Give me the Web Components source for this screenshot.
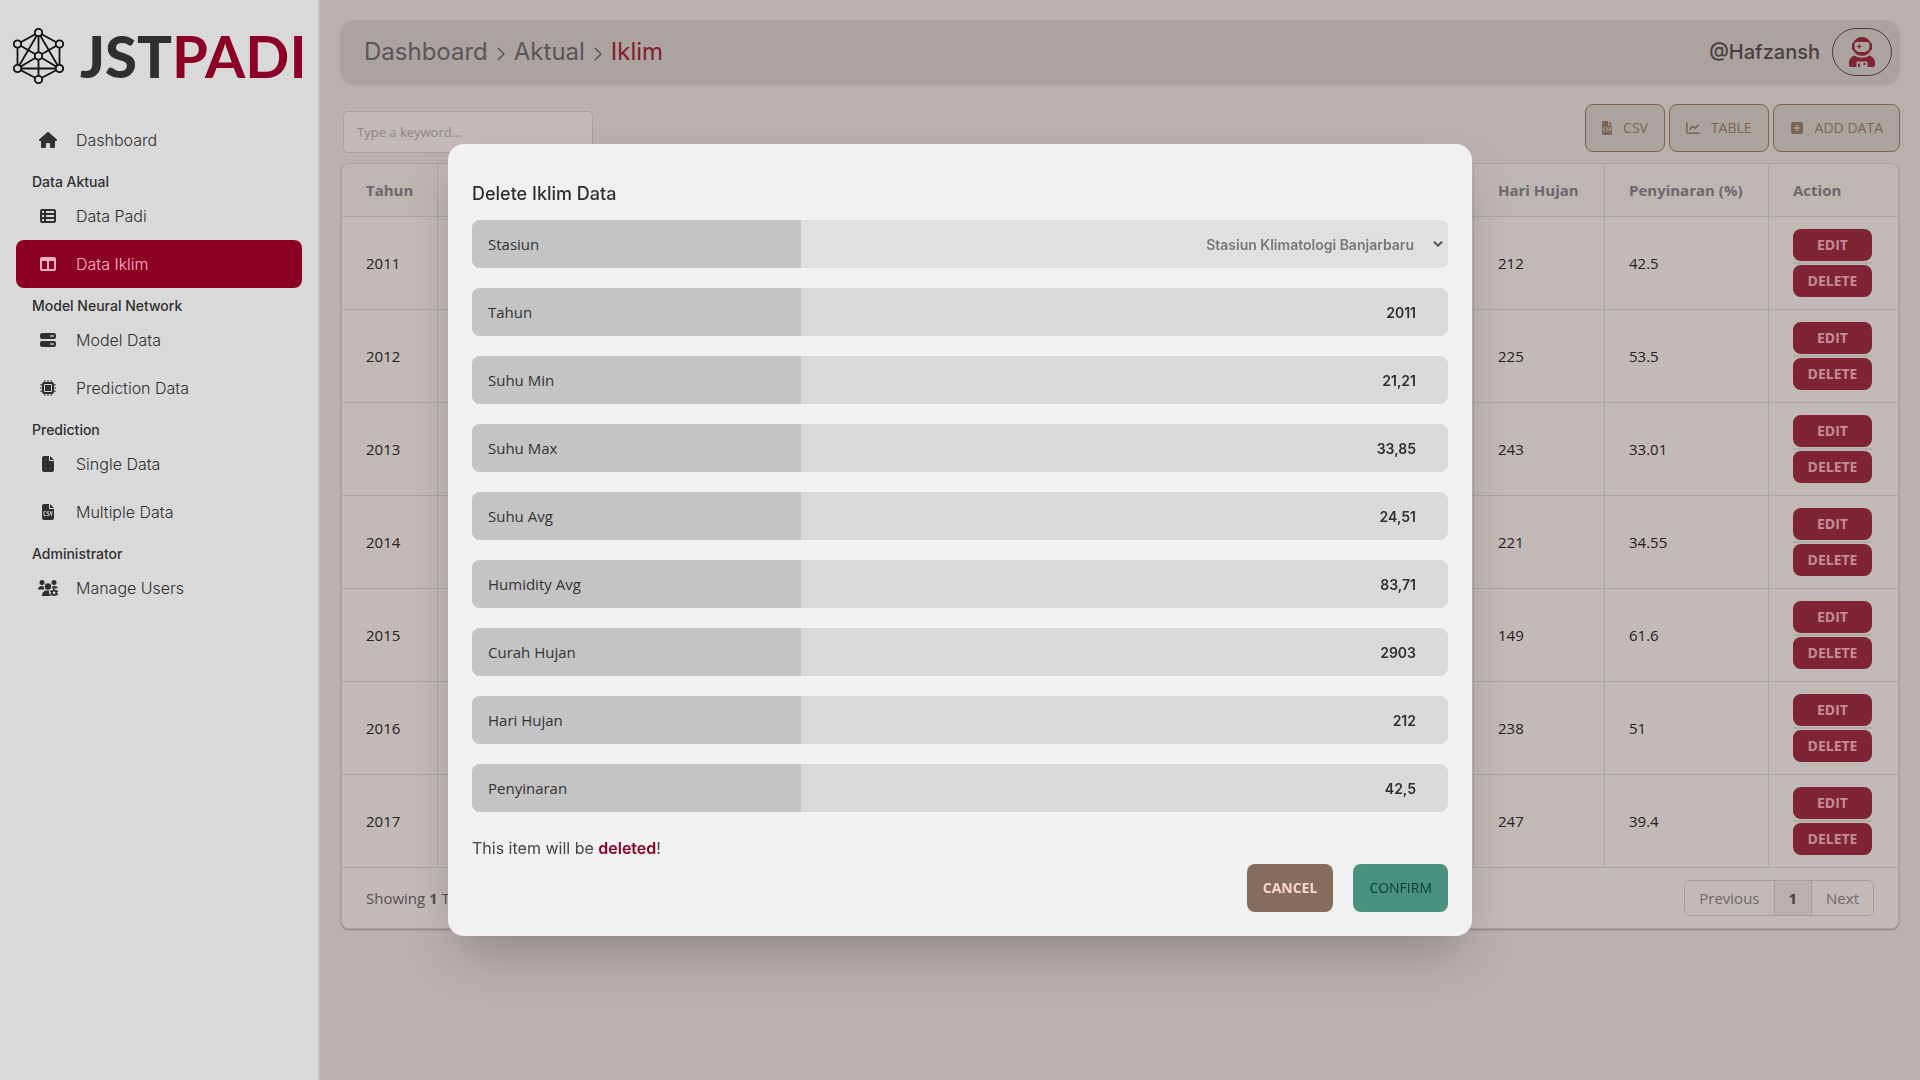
<!DOCTYPE html>
<html lang="id">
<head>
<meta charset="utf-8">
<title>JSTPADI – Iklim</title>
<style>
html,body{margin:0;min-height:100%}
body{background:#bab1ae;color:#2f2f2f;font-family:"Open Sans","Noto Sans",sans-serif;font-size:15px;font-optical-sizing:none;
--accent:#8c0026;--ui:"Inter",sans-serif}
</style>
</head>
<body>
<jst-app></jst-app>
<script>
const ICONS={
home:['0 0 576 512','<path d="M575.8 255.5c0 18-15 32.1-32 32.1h-32l.7 160.2c0 2.7-.2 5.4-.5 8.1V472c0 22.1-17.9 40-40 40H392c-22.1 0-40-17.9-40-40V384c0-17.700-14.300-32-32-32H256c-17.700 0-32 14.300-32 32v88c0 22.100-17.900 40-40 40H104c-22.100 0-40-17.900-40-40V287.600H32c-18 0-32-14-32-32.100c0-9 3-17 10-24L266.400 8c7-7 15-8 22-8s15 2 21 7L564.800 231.500c8 7 12 15 11 24z"/>'],
list:['0 0 16 16','<path fill-rule="evenodd" d="M2 1h12a2 2 0 0 1 2 2v10a2 2 0 0 1-2 2H2a2 2 0 0 1-2-2V3a2 2 0 0 1 2-2zM2 3v2h2V3zM6 3v2h8V3zM2 7v2h2V7zM6 7v2h8V7zM2 11v2h2v-2zM6 11v2h8v-2z"/>'],
columns:['0 0 16 16','<path fill-rule="evenodd" d="M2 1h12a2 2 0 0 1 2 2v10a2 2 0 0 1-2 2H2a2 2 0 0 1-2-2V3a2 2 0 0 1 2-2zM2 5v8h5V5zM9 5v8h5V5z"/>'],
server:['0 0 16 16','<path d="M2 1h12a2 2 0 0 1 2 2v2a2 2 0 0 1-2 2H2a2 2 0 0 1-2-2V3a2 2 0 0 1 2-2zM2 9h12a2 2 0 0 1 2 2v2a2 2 0 0 1-2 2H2a2 2 0 0 1-2-2v-2a2 2 0 0 1 2-2z"/><path fill="#999" d="M10 3h4v2h-4zM10 11h4v2h-4z"/>'],
chip:['0 0 16 16','<path fill-opacity=".6" d="M4 0h1.500v16H4zM7.250 0h1.500v16h-1.500zM10.500 0H12v16h-1.500zM0 4h16v1.500H0zM0 7.250h16v1.500H0zM0 10.500h16V12H0z"/><path d="M4 2h8a2 2 0 0 1 2 2v8a2 2 0 0 1-2 2H4a2 2 0 0 1-2-2V4a2 2 0 0 1 2-2z"/><path fill="none" stroke="#d9d9d9" d="M4.500 4.500h7v7h-7z"/>'],
file:['0 0 12 16','<path d="M0 2a2 2 0 0 1 2-2h5v4a1 1 0 0 0 1 1h4v9a2 2 0 0 1-2 2H2a2 2 0 0 1-2-2zM8 0v4h4z"/>'],
csv:['0 0 12 16','<path d="M0 2a2 2 0 0 1 2-2h5v4a1 1 0 0 0 1 1h4v9a2 2 0 0 1-2 2H2a2 2 0 0 1-2-2zM8 0v4h4z"/><path fill="none" stroke="var(--hole,#d9d9d9)" stroke-width=".9" d="M4 7.700H1.900v3.800H4M7.300 7.700H5.300v1.700h1.600v2.100H4.900M8.300 7.300l1 4.200 1-4.200"/>'],
users:['0 0 20 16','<circle cx="4" cy="2.500" r="2.500"/><circle cx="16" cy="2.500" r="2.500"/><circle cx="10" cy="6.500" r="3.200"/><path d="M0 9.500C0 7.300 1.500 6 3.500 6c1 0 1.700.2 2.300.6-.2 1.200.1 2.100.8 2.900zM14.200 6.600c.6-.4 1.300-.6 2.300-.6 1.500 0 2.900.8 3.300 2l-2 .4h-4c.4-.6.5-1.200.4-1.800zM4 16c0-3.500 2-5.500 5-5.500h2.300c-.6 2.200 0 4.200 1.700 5.500z"/><path fill-rule="evenodd" d="M15.300 8.700h1.600l.3 1.200.9.500 1.200-.4.800 1.400-.9.900v1l.9.900-.8 1.400-1.200-.4-.9.500-.3 1.200h-1.600l-.3-1.200-.9-.5-1.200.4-.8-1.400.9-.9v-1l-.9-.9.800-1.400 1.200.4.900-.5zM16.100 11.400a1.400 1.400 0 1 0 0 2.800 1.400 1.400 0 0 0 0-2.800z"/>'],
chart:['0 0 16 16','<path fill="none" stroke="currentColor" stroke-width="1.700" stroke-linecap="round" stroke-linejoin="round" d="M1 2v10.500a1.500 1.500 0 0 0 1.500 1.500H15M4.500 9.500 7.500 6l3 2.500L14 4.500"/>'],
plus:['0 0 14 14','<path fill-rule="evenodd" d="M3 1h8a2 2 0 0 1 2 2v8a2 2 0 0 1-2 2H3a2 2 0 0 1-2-2V3a2 2 0 0 1 2-2zM6.200 4v2.200H4v1.600h2.200V10h1.600V7.800H10V6.200H7.800V4z"/>'],
astronaut:['0 0 26 30','<path fill-rule="evenodd" d="M4.500 5.500C6 2 9 0 13 0s7 2 8.500 5.500L23 6.500v6l-1.500 1C20 17 17 18.700 13 18.700S6 17 4.500 13.500L3 12.500v-6zM8.500 5A3 3 0 0 0 5.500 8v2a5 5 0 0 0 5 5h5a5 5 0 0 0 5-5V8a3 3 0 0 0-3-3zM10.300 6.500l.8 2.200 2.200.8-2.200.8-.8 2.200-.8-2.200-2.200-.8 2.200-.8zM5.500 18.500c4.500 3 10.500 3 15 0 3 .8 5.500 3.800 5.500 7.500v2a2 2 0 0 1-2 2h-5.500v-4.500a1 1 0 0 0-1-1h-9a1 1 0 0 0-1 1V30H2a2 2 0 0 1-2-2v-2c0-3.700 2.500-6.700 5.500-7.500zM9 26.500h2V30H9zM14.500 26h2v2h-2z"/>'],
net:['0 0 51 56','<g fill="none" stroke="#111" stroke-width="1.800"><path d="M25.500 4.500 4.500 16v24.500l21 11 21-11V16zM25.500 4.500v47M25.500 4.500l-21 36h42zM4.500 16l21 12 21-12M4.500 40.500l21-12.500 21 12.500"/><g fill="#d9d9d9"><circle cx="25.500" cy="4.500" r="3.700"/><circle cx="4.500" cy="16" r="3.700"/><circle cx="46.500" cy="16" r="3.700"/><circle cx="25.500" cy="28" r="3.700"/><circle cx="4.500" cy="40.500" r="3.700"/><circle cx="46.500" cy="40.500" r="3.700"/><circle cx="25.500" cy="51.500" r="3.700"/></g></g>']
};
function define(name,render){
  customElements.define(name,class extends HTMLElement{
    constructor(){super();this.attachShadow({mode:'open'})}
    connectedCallback(){
      const t=document.createElement('template');
      t.innerHTML='<style>*{box-sizing:border-box}'+render(this);
      this.shadowRoot.replaceChildren(t.content.cloneNode(true));
    }
  });
}
define('jst-icon',e=>{
  const [box,body]=ICONS[e.getAttribute('name')];
  return `:host{display:inline-flex;justify-content:center;align-items:center;flex:none}svg{display:block;height:100%;width:auto;fill:currentColor}</style>
  <svg viewBox="${box}" aria-hidden="true">${body}</svg>`});
define('nav-link',e=>`:host{display:block}
a{display:flex;align-items:center;gap:16px;height:48px;padding:0 20px;border-radius:8px;color:#2f2f2f;text-decoration:none;font:300 16px/24px var(--ui)}
jst-icon{width:24px;height:16px}
:host([active]) a{background:var(--accent);color:#ffb3c8}</style>
<a href="#"><jst-icon name="${e.getAttribute('icon')}"></jst-icon><slot></slot></a>`);
define('nav-heading',()=>`:host{display:block;padding:8px 16px 0;font:500 14px/20px var(--ui);color:#2f2f2f}</style><slot></slot>`);
define('app-sidebar',()=>`:host{display:block;flex:none;width:320px;min-height:100vh;box-sizing:border-box;background:#d9d9d9;border-right:2px solid #c3bfbe;padding:20px 16px}
.logo{display:flex;align-items:center;gap:16px;height:72px;margin:0 -3px 24px;font:900 58px/72px Lato,sans-serif;color:#2f2f2f}
.logo jst-icon{height:56px}.logo span{color:var(--accent);font-weight:700}</style>
<div class="logo"><jst-icon name="net"></jst-icon><div>JST<span>PADI</span></div></div>
<nav>
<nav-link icon="home">Dashboard</nav-link>
<nav-heading>Data Aktual</nav-heading>
<nav-link icon="list">Data Padi</nav-link>
<nav-link icon="columns" active>Data Iklim</nav-link>
<nav-heading>Model Neural Network</nav-heading>
<nav-link icon="server">Model Data</nav-link>
<nav-link icon="chip">Prediction Data</nav-link>
<nav-heading>Prediction</nav-heading>
<nav-link icon="file">Single Data</nav-link>
<nav-link icon="csv">Multiple Data</nav-link>
<nav-heading>Administrator</nav-heading>
<nav-link icon="users">Manage Users</nav-link>
</nav>`);
define('app-header',()=>`:host{display:flex;align-items:flex-start;justify-content:space-between;height:65px;padding:8px 8px 0 24px;box-sizing:border-box;border-radius:16px;background:#aba39f;box-shadow:0 1px 2px #0000000d;font-family:var(--ui)}
nav{display:flex;align-items:center;gap:9px;font-size:24px;line-height:48px;color:#58565a}
nav svg{width:8px;height:14px;margin-top:4px;fill:none;stroke:#58565a;stroke-width:1.5}
a{color:inherit;text-decoration:none}a.on{color:#851c34}
.user{display:flex;align-items:center;gap:12px;font-size:20px;font-weight:500;color:#47403e}
button{width:60px;height:48px;border:1px solid #47403e;border-radius:24px;background:none;color:#7f2434;padding:0;display:flex;align-items:center;justify-content:center}
button jst-icon{height:30px}</style>
<nav aria-label="Breadcrumb"><a href="#">Dashboard</a><svg viewBox="0 0 8 14"><path d="M1 1l6 6-6 6"/></svg><a href="#">Aktual</a><svg viewBox="0 0 8 14"><path d="M1 1l6 6-6 6"/></svg><a class="on" href="#">Iklim</a></nav>
<div class="user"><span>@Hafzansh</span><button aria-label="Profile"><jst-icon name="astronaut"></jst-icon></button></div>`);
define('tool-button',e=>`:host{display:block;--hole:#aba39f}
button{display:flex;align-items:center;gap:11px;height:48px;padding:0 16px;border:1px solid #7d6455;border-radius:8px;background:#aba39f;color:#7d6455;font:500 14px/20px "Open Sans",sans-serif}
jst-icon{height:14px}</style><button><jst-icon name="${e.getAttribute('icon')}"></jst-icon><slot></slot></button>`);
define('app-toolbar',()=>`:host{display:flex;align-items:flex-end;justify-content:space-between;height:49px;margin:19px 0 10px}
input{width:250px;height:42px;margin-left:3px;padding:0 13px;border:1px solid #a5a09f;border-radius:5px;background:#c2bab7;font:13px/20px "Open Sans",sans-serif;color:#2f2f2f}
input::placeholder{color:#8d8687;opacity:1}
div{display:flex;gap:4px;align-self:flex-start}</style>
<input type="search" placeholder="Type a keyword..." aria-label="Search"><div><tool-button icon="csv">CSV</tool-button><tool-button icon="chart">TABLE</tool-button><tool-button icon="plus">ADD DATA</tool-button></div>`);
const ROWS=[[2011,212,'42.5'],[2012,225,'53.5'],[2013,243,'33.01'],[2014,221,'34.55'],[2015,149,'61.6'],[2016,238,'51'],[2017,247,'39.4']];
define('row-actions',()=>`:host{display:flex;flex-direction:column;width:79px}
button{height:32px;border:0;border-radius:8px;padding:0;background:#7f2434;color:#c48c99;font:700 14px/20px "Open Sans",sans-serif}
hr{width:100%;height:2px;border:0;margin:1px 0;background:#b1abaa}</style><button>EDIT</button><hr><button>DELETE</button>`);
define('data-grid',()=>`:host{display:block;margin:0 1px;border:1px solid #a9a3a1;border-radius:8px;background:#c2bab7;box-shadow:0 1px 2px #00000040;overflow:hidden}
table{width:100%;border-collapse:separate;border-spacing:0;table-layout:fixed}
th{height:53px;background:#beb6b3;color:#6a686d;font-weight:700;text-align:left}
td{height:93px;color:#26201f}
th,td{padding:0 24px;border-bottom:1px solid #aba7a5}
th+th,td+td{border-left:1px solid #aba7a5}
footer{display:flex;justify-content:space-between;align-items:center;padding:12px 24px;color:#565052}
.pages{display:flex;border:1px solid #a5a09f;border-radius:6px;overflow:hidden}
.pages button{height:34px;padding:0 14px;border:0;background:none;font:15px/20px "Open Sans",sans-serif;color:#6f696a}
.pages button+button{border-left:1px solid #a5a09f}
.pages .on{background:#b9b1ae;font-weight:700;color:#47403e}</style>
<table><colgroup><col style="width:95px"><col><col style="width:131px"><col style="width:164px"><col style="width:130px"></colgroup>
<thead><tr><th>Tahun</th><th></th><th>Hari Hujan</th><th>Penyinaran (%)</th><th>Action</th></tr></thead>
<tbody>${ROWS.map(r=>`<tr><td>${r[0]}</td><td></td><td>${r[1]}</td><td>${r[2]}</td><td><row-actions></row-actions></td></tr>`).join('')}</tbody></table>
<footer><span>Showing <b>1</b> To <b>7</b> of <b>7</b> results</span><div class="pages"><button>Previous</button><button class="on">1</button><button>Next</button></div></footer>`);
define('form-field',e=>{
 const l=e.getAttribute('label'),v=e.getAttribute('value');
 return `:host{display:flex;height:48px;border-radius:8px;overflow:hidden;background:#d9d9d9}
:host([select]){background:#e0e0e0}
label{flex:0 0 329px;padding:0 16px;line-height:48px;background:#c4c4c4;color:#333}
input,select{flex:1;min-width:0;border:0;margin:0;background:transparent;text-align:right;font:600 14px/20px var(--ui);color:#2f2f2f;outline:0;opacity:1}
input{padding:2px 32px 0 16px}
.pick{flex:1;display:grid;align-items:center}
.pick>*{grid-area:1/1}
select{appearance:none;height:48px;width:100%;padding:2px 34px 0 16px;text-align-last:right;color:#777}
.pick svg{justify-self:end;width:10px;height:6px;margin-right:5px;fill:none;stroke:#555;stroke-width:2}</style>
<label for="f">${l}</label>${e.hasAttribute('select')?`<div class="pick"><select id="f" disabled><option>${v}</option></select><svg viewBox="0 0 10 6"><path d="M1 .7l4 4 4-4"/></svg></div>`:`<input id="f" readonly value="${v}">`}`});
define('delete-dialog',()=>`:host{position:fixed;inset:0;display:grid;place-items:center;padding:20px}
dialog{position:static;width:100%;max-width:1024px;border:0;margin:0;padding:37px 24px 24px;border-radius:16px;background:#f1f1f1;color:#2f2f2f;box-shadow:0 25px 50px -12px #00000040}
h2{margin:0 0 13px;font:500 18px/26px var(--ui)}
form{display:flex;flex-direction:column;gap:20px}
p{margin:22px 0 2px;font:400 16px/28px var(--ui);color:#444}p b{font-weight:600;color:var(--accent)}
.act{display:flex;justify-content:flex-end;gap:20px}
.act button{height:48px;padding:0 16px;border:0;border-radius:8px;font:700 14px/20px "Open Sans",sans-serif;background:#866c5d;color:#ffd9c4}
.act .ok{font-weight:500;background:#48927f;color:#0b3d2c}</style>
<dialog open aria-labelledby="t"><h2 id="t">Delete Iklim Data</h2>
<form>
<form-field select label="Stasiun" value="Stasiun Klimatologi Banjarbaru"></form-field>
<form-field label="Tahun" value="2011"></form-field>
<form-field label="Suhu Min" value="21,21"></form-field>
<form-field label="Suhu Max" value="33,85"></form-field>
<form-field label="Suhu Avg" value="24,51"></form-field>
<form-field label="Humidity Avg" value="83,71"></form-field>
<form-field label="Curah Hujan" value="2903"></form-field>
<form-field label="Hari Hujan" value="212"></form-field>
<form-field label="Penyinaran" value="42,5"></form-field>
</form>
<p>This item will be <b>deleted</b>!</p>
<div class="act"><button>CANCEL</button><button class="ok">CONFIRM</button></div></dialog>`);
define('jst-app',()=>`:host{display:flex;min-height:100vh}main{flex:1;min-width:0;padding:20px}</style>
<app-sidebar></app-sidebar><main><app-header></app-header><app-toolbar></app-toolbar><data-grid></data-grid></main><delete-dialog></delete-dialog>`);
</script>
</body>
</html>
